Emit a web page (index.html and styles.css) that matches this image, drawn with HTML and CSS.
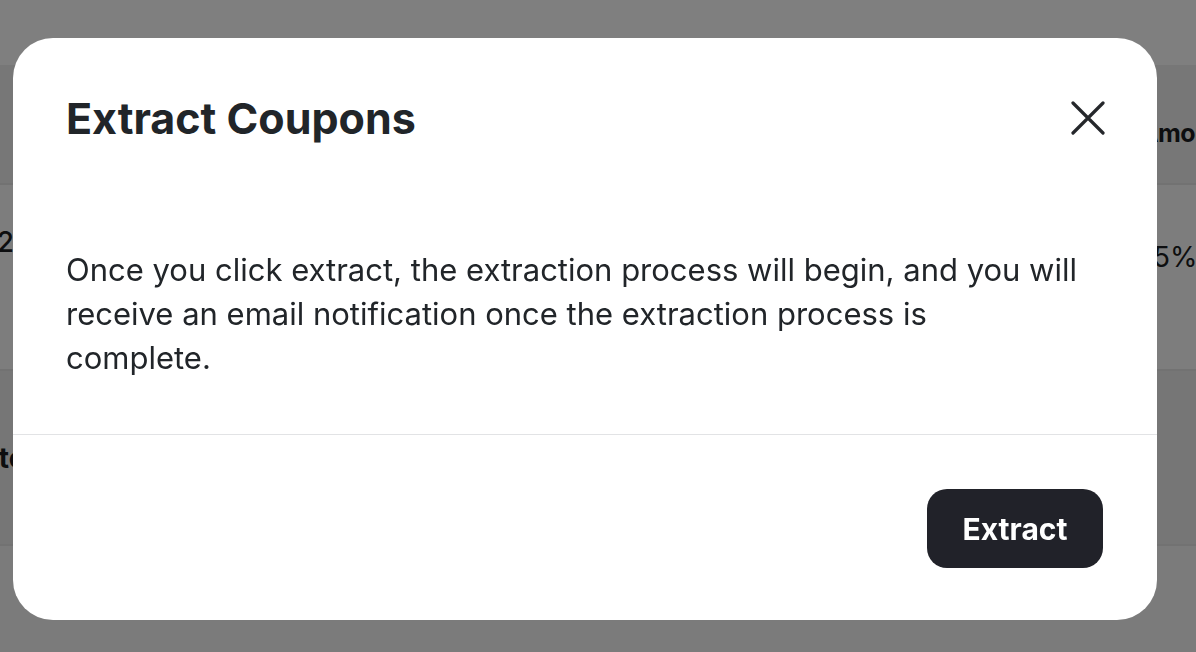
FILE: index.html
```html
<!DOCTYPE html>
<html lang="en">
<head>
<meta charset="utf-8">
<title>Extract Coupons</title>
<link rel="stylesheet" href="styles.css">
</head>
<body>
<div class="page">
  <div class="topbar"></div>
  <div class="row head">
    <div class="cell-left"><span></span></div>
    <div class="cell-right hcell bold"><span>Amount</span></div>
  </div>
  <div class="row r1">
    <div class="cell-left l1"><span>2024-02</span></div>
    <div class="cell-right r1c"><span>25%</span></div>
  </div>
  <div class="row r2">
    <div class="cell-left l2 bold"><span>Auto</span></div>
    <div class="cell-right"><span></span></div>
  </div>
  <div class="row r3"></div>
</div>

<div class="overlay">
  <div class="modal">
    <div class="modal-header">
      <h2 class="modal-title">Extract Coupons</h2>
      <button class="close" aria-label="Close">
        <svg width="34" height="34" viewBox="0 0 34 34"><path d="M2 2 L32 32 M32 2 L2 32" stroke="#25272b" stroke-width="3.2" stroke-linecap="round" fill="none"/></svg>
      </button>
    </div>
    <div class="modal-body">
      <p>Once you click extract, the extraction process will begin, and you will receive an email notification once the extraction process is complete.</p>
    </div>
    <div class="modal-footer">
      <button class="btn">Extract</button>
    </div>
  </div>
</div>
</body>
</html>
```
FILE: styles.css
```css
* { box-sizing: border-box; }
html, body { margin: 0; padding: 0; }
body {
  width: 1196px;
  height: 652px;
  overflow: hidden;
  background: #ffffff;
  font-family: Inter, "Noto Sans", sans-serif;
  color: #212529;
}
.page {
  display: flex;
  flex-direction: column;
}
.topbar { height: 65px; background: #ffffff; }
.row {
  display: flex;
  justify-content: space-between;
  font-size: 28px;
  color: #1b1d21;
  border-bottom: 2px solid #e4e4e4;
}
.head { height: 120px; background: #eeeeee; align-items: center; padding-top: 18px; }
.r1 { height: 186px; background: #fbfbfb; }
.r2 { height: 175px; background: #ededed; align-items: center; }
.r3 { height: 110px; background: #f6f6f6; border-bottom: none; }
.bold { font-weight: 700; }
.cell-left {
  width: 14px;
  display: flex;
  justify-content: flex-end;
  white-space: nowrap;
}
.l1 { padding-top: 40px; font-weight: 500; }
.l2 { width: 26px; }
.cell-right {
  width: 60px;
  white-space: nowrap;
}
.hcell { width: 56px; font-size: 25px; letter-spacing: -0.6px; }
.r1c { padding-top: 55px; }

.overlay {
  position: fixed;
  inset: 0;
  background: rgba(0, 0, 0, 0.5);
  display: flex;
  align-items: flex-start;
}
.modal {
  margin: 38px 0 0 13px;
  width: 1144px;
  height: 582px;
  background: #ffffff;
  border-radius: 40px;
  display: flex;
  flex-direction: column;
}
.modal-header {
  display: flex;
  align-items: center;
  justify-content: space-between;
  padding: 56px 52px 0 53px;
}
.modal-title {
  margin: 0;
  font-size: 43px;
  line-height: 48px;
  font-weight: 700;
  color: #212529;
}
.close {
  border: 0;
  background: none;
  padding: 0;
  width: 34px;
  height: 34px;
  display: flex;
}
.modal-body {
  padding: 106px 52px 54px 53px;
  border-bottom: 1px solid #e2e3e5;
}
.modal-body p {
  margin: 0;
  max-width: 1012px;
  font-size: 31px;
  line-height: 44px;
  color: #212529;
}
.modal-footer {
  display: flex;
  justify-content: flex-end;
  padding: 54px 54px 0 0;
}
.btn {
  width: 176px;
  height: 79px;
  border: 0;
  border-radius: 20px;
  background: #212229;
  color: #ffffff;
  font-family: Inter, "Noto Sans", sans-serif;
  font-size: 30px;
  font-weight: 700;
}
```
